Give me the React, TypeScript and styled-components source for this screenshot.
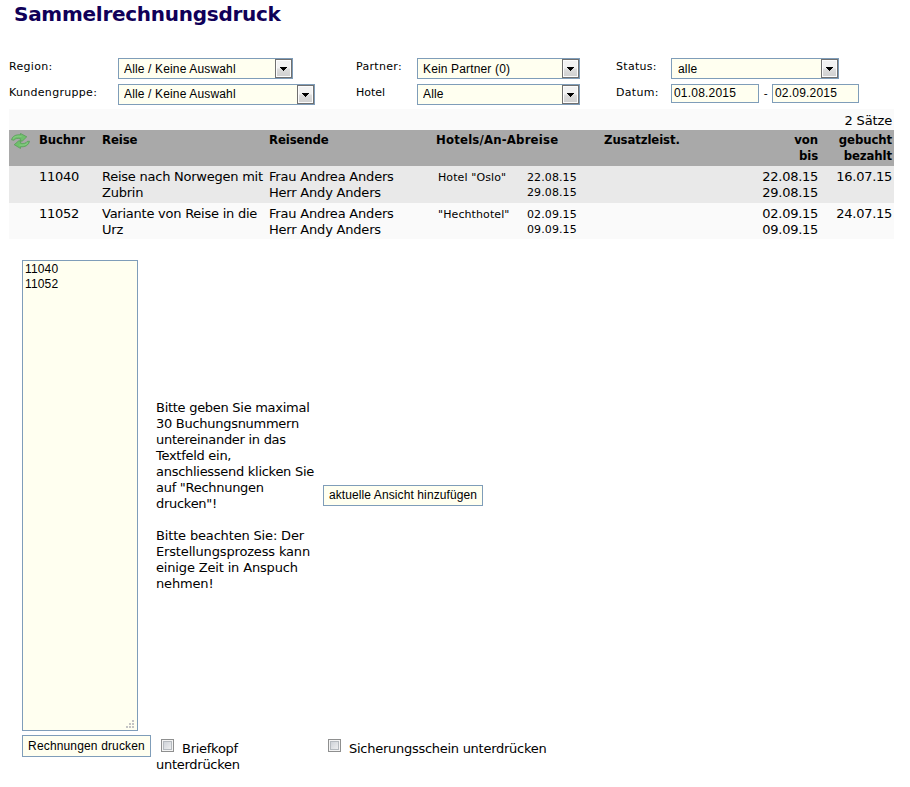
import React, { useState } from "react";
import styled, { createGlobalStyle } from "styled-components";

const GlobalStyle = createGlobalStyle`
  * {
    box-sizing: border-box;
  }
  body {
    margin: 0;
    background: #fff;
    color: #000;
    font: 13px/16px "DejaVu Sans", Verdana, sans-serif;
    letter-spacing: -0.27px;
  }
`;

const Page = styled.main`
  width: 910px;
  height: 787px;
  padding: 0 16px 0 9px;
  overflow: hidden;
`;

const Title = styled.h1`
  height: 58px;
  margin: 0;
  padding: 1px 0 0 5px;
  color: #100058;
  font-size: 20px;
  line-height: 26px;
`;

const Filters = styled.div`
  display: grid;
  grid-template-columns: 109px 238px 61px 199px 55px 1fr;
  grid-template-rows: 26px 25px;
`;

const Label = styled.label<{ $gap?: number }>`
  padding-top: 1px;
  font-size: 11px;
  line-height: 16px;
  letter-spacing: ${({ $gap = 0.3 }) => $gap}px;
`;

const SelectBox = styled.div<{ $width: number }>`
  display: flex;
  width: ${({ $width }) => $width}px;
  height: 21px;
  border: 1px solid #7f9db9;
  background: #fffff0;
`;

const Select = styled.select<{ $indent?: number; $lift?: number }>`
  flex: 1;
  min-width: 0;
  height: 19px;
  margin: 0;
  padding: 0 0 ${({ $lift = 0 }) => $lift}px ${({ $indent = 5 }) => $indent}px;
  border: 0;
  outline: 0;
  appearance: none;
  background: transparent;
  color: #000;
  font: 12px/16px "Liberation Sans", Arial, sans-serif;
  letter-spacing: 0.15px;
`;

const Arrow = styled.span`
  display: flex;
  align-items: center;
  justify-content: center;
  width: 17px;
  height: 19px;
  border: 1px solid #707070;
  box-shadow: inset 0 0 0 1px #fcfcfc;
  background: linear-gradient(#f2f2f2 0 48%, #dddddd 52%, #cfcfcf);
`;

const Dates = styled.div`
  display: flex;
  height: 19px;
  font-size: 11px;
  line-height: 19px;
`;

const DateInput = styled.input<{ $width: number }>`
  width: ${({ $width }) => $width}px;
  height: 19px;
  margin: 0;
  padding: 0 2px 1px;
  border: 1px solid #7f9db9;
  background: #fffff0;
  color: #000;
  font: 12px/16px "Liberation Sans", Arial, sans-serif;
  letter-spacing: 0.2px;
`;

const Dash = styled.span`
  width: 13px;
  text-align: center;
`;

const Table = styled.section`
  width: 885px;
  background: #fafafa;
`;

const Count = styled.div`
  height: 21px;
  padding: 4px 2px 0 0;
  text-align: right;
  letter-spacing: -0.15px;
`;

const Row = styled.div<{ $bg: string; $height: number }>`
  display: grid;
  grid-template-columns: 30px 63px 167px 167px 168px 140px 74px 74px;
  height: ${({ $height }) => $height}px;
  padding-top: 3px;
  background: ${({ $bg }) => $bg};
`;

const HeadRow = styled(Row)`
  padding-top: 2px;
  font-family: "DejaVu Sans Condensed", "DejaVu Sans", Tahoma, sans-serif;
  font-stretch: condensed;
  font-weight: bold;
  letter-spacing: -0.1px;
`;

const Cell = styled.div<{ $right?: boolean; $gap?: number }>`
  text-align: ${({ $right }) => ($right ? "right" : "left")};
  letter-spacing: ${({ $gap }) => ($gap === undefined ? "inherit" : `${$gap}px`)};
  white-space: pre-line;
`;

const HotelCell = styled.div`
  display: grid;
  grid-template-columns: 89px 1fr;
  padding: 1px 0 0 2px;
  font-size: 11px;
  line-height: 15px;
  letter-spacing: 0.1px;
  white-space: pre-line;
`;

const RefreshIcon = styled.svg`
  display: block;
  margin: 1px 0 0 2px;
`;

const PrintForm = styled.section`
  display: grid;
  grid-template-columns: 134px 167px 1fr;
  grid-template-rows: 471px 1fr;
  row-gap: 4px;
  padding: 21px 0 0 13px;
`;

const Numbers = styled.textarea`
  display: block;
  width: 116px;
  height: 471px;
  margin: 0;
  padding: 1px 2px;
  border: 1px solid #7f9db9;
  outline: 0;
  resize: none;
  background: #fffff0;
  color: #000;
  font: 12px/15px "Liberation Sans", Arial, sans-serif;
  letter-spacing: 0.15px;
`;

const Field = styled.div`
  position: relative;
`;

const Grip = styled.svg`
  position: absolute;
  left: 104px;
  top: 460px;
`;

const Hint = styled.div`
  align-self: center;
`;

const HintText = styled.p<{ $gap: number }>`
  margin: 0;
  letter-spacing: ${({ $gap }) => $gap}px;
  white-space: pre;

  & + & {
    margin-top: 16px;
  }
`;

const Button = styled.button<{ $width: number; $height: number }>`
  width: ${({ $width }) => $width}px;
  height: ${({ $height }) => $height}px;
  margin: 0;
  padding: 0 0 1px;
  border: 1px solid #7f9db9;
  background: #fffff0;
  color: #000;
  font: 12px/16px "Liberation Sans", Arial, sans-serif;
  letter-spacing: 0.15px;
  white-space: nowrap;
`;

const AddButton = styled(Button)`
  align-self: center;
  letter-spacing: 0.1px;
`;

const Check = styled.label`
  display: block;
  padding-top: 4px;
  white-space: pre-line;
`;

const Checkbox = styled.input`
  width: 13px;
  height: 13px;
  margin: 0 8px 0 5px;
  vertical-align: 1px;
  appearance: none;
  border: 1px solid #8e8f8f;
  box-shadow: inset 0 0 0 1px #f4f4f4, inset 0 0 0 2px #b5babf;
  background: linear-gradient(135deg, #c6cbd2, #f6f6f6);
`;

type DropdownProps = {
  width: number;
  value: string;
  indent?: number;
  lift?: number;
};

const Dropdown = ({ width, value, indent, lift }: DropdownProps) => (
  <SelectBox $width={width}>
    <Select $indent={indent} $lift={lift}>
      <option>{value}</option>
    </Select>
    <Arrow>
      <svg width="7" height="4" shapeRendering="crispEdges">
        <path d="M0 0h7v1H0zM1 1h5v1H1zM2 2h3v1H2zM3 3h1v1H3z" />
      </svg>
    </Arrow>
  </SelectBox>
);

const bookings = [
  {
    id: "11040",
    trip: "Reise nach Norwegen mit\nZubrin",
    hotel: 'Hotel "Oslo"',
    dates: "22.08.15\n29.08.15",
    booked: "16.07.15",
    bg: "#e9e9e9",
    height: 37,
  },
  {
    id: "11052",
    trip: "Variante von Reise in die\nUrz",
    hotel: '"Hechthotel"',
    dates: "02.09.15\n09.09.15",
    booked: "24.07.15",
    bg: "#fafafa",
    height: 36,
  },
];

export default function App(): React.JSX.Element {
  const [numbers, setNumbers] = useState("11040\n11052");

  return (
    <>
      <GlobalStyle />
      <Page>
        <Title>Sammelrechnungsdruck</Title>
        <Filters>
          <Label>Region:</Label>
          <Dropdown width={175} value="Alle / Keine Auswahl" />
          <Label>Partner:</Label>
          <Dropdown width={163} value="Kein Partner (0)" />
          <Label>Status:</Label>
          <Dropdown width={168} value="alle" indent={6} />
          <Label>Kundengruppe:</Label>
          <Dropdown width={197} value="Alle / Keine Auswahl" lift={2} />
          <Label $gap={0}>Hotel</Label>
          <Dropdown width={163} value="Alle" lift={2} />
          <Label>Datum:</Label>
          <Dates>
            <DateInput $width={88} defaultValue="01.08.2015" />
            <Dash>-</Dash>
            <DateInput $width={87} defaultValue="02.09.2015" />
          </Dates>
        </Filters>
        <Table>
          <Count>2 Sätze</Count>
          <HeadRow $bg="#a9a9a9" $height={36}>
            <RefreshIcon width="19" height="16" viewBox="0 0 19 16">
              <g fill="#6fbf6c" stroke="#4c974c" strokeWidth="0.6">
                <path d="M.5 6.800C1.500 3 4.800 1.400 9.500 1.800V.4L15.800 3.800 11.500 8 8.800 7.600 9.700 5.800C6.600 5 4.400 5.400 2.900 7.300z" />
                <path d="M18.500 8.200C17.500 12.500 14.200 14.100 9.500 13.800v1.700L3.200 11.700 7.500 7.900l2.700.4-.9 1.800c3.100.8 5.300.4 6.800-1.700z" />
              </g>
              <path
                d="M2 5.500C4 3.200 6.500 2.800 10.500 3.300M17 9.700C15 12 12.500 12.500 8.500 12"
                fill="none"
                stroke="#8fd08c"
                strokeWidth="0.8"
              />
            </RefreshIcon>
            <Cell>Buchnr</Cell>
            <Cell>Reise</Cell>
            <Cell>Reisende</Cell>
            <Cell $gap={0.2}>Hotels/An-Abreise</Cell>
            <Cell>Zusatzleist.</Cell>
            <Cell $right>{"von\nbis"}</Cell>
            <Cell $right>{"gebucht\nbezahlt"}</Cell>
          </HeadRow>
          {bookings.map((booking) => (
            <Row key={booking.id} $bg={booking.bg} $height={booking.height}>
              <Cell />
              <Cell>{booking.id}</Cell>
              <Cell $gap={-0.24}>{booking.trip}</Cell>
              <Cell $gap={-0.2}>{"Frau Andrea Anders\nHerr Andy Anders"}</Cell>
              <HotelCell>
                <span>{booking.hotel}</span>
                <span>{booking.dates}</span>
              </HotelCell>
              <Cell />
              <Cell $right>{booking.dates}</Cell>
              <Cell $right>{booking.booked}</Cell>
            </Row>
          ))}
        </Table>
        <PrintForm>
          <Field>
            <Numbers
              value={numbers}
              onChange={(e) => setNumbers(e.target.value)}
            />
            <Grip width="9" height="9" fill="#c4c4c4" shapeRendering="crispEdges">
              <path d="M6 0h2v2H6zM3 3h2v2H3zM6 3h2v2H6zM0 6h2v2H0zM3 6h2v2H3zM6 6h2v2H6z" />
            </Grip>
          </Field>
          <Hint>
            <HintText $gap={-0.28}>
              {`Bitte geben Sie maximal
30 Buchungsnummern
untereinander in das
Textfeld ein,
anschliessend klicken Sie
auf "Rechnungen
drucken"!`}
            </HintText>
            <HintText $gap={-0.16}>
              {`Bitte beachten Sie: Der
Erstellungsprozess kann
einige Zeit in Anspuch
nehmen!`}
            </HintText>
          </Hint>
          <AddButton $width={160} $height={21}>
            aktuelle Ansicht hinzufügen
          </AddButton>
          <Button $width={129} $height={22}>
            Rechnungen drucken
          </Button>
          <Check>
            <Checkbox type="checkbox" />
            {"Briefkopf\nunterdrücken"}
          </Check>
          <Check>
            <Checkbox type="checkbox" />
            Sicherungsschein unterdrücken
          </Check>
        </PrintForm>
      </Page>
    </>
  );
}
